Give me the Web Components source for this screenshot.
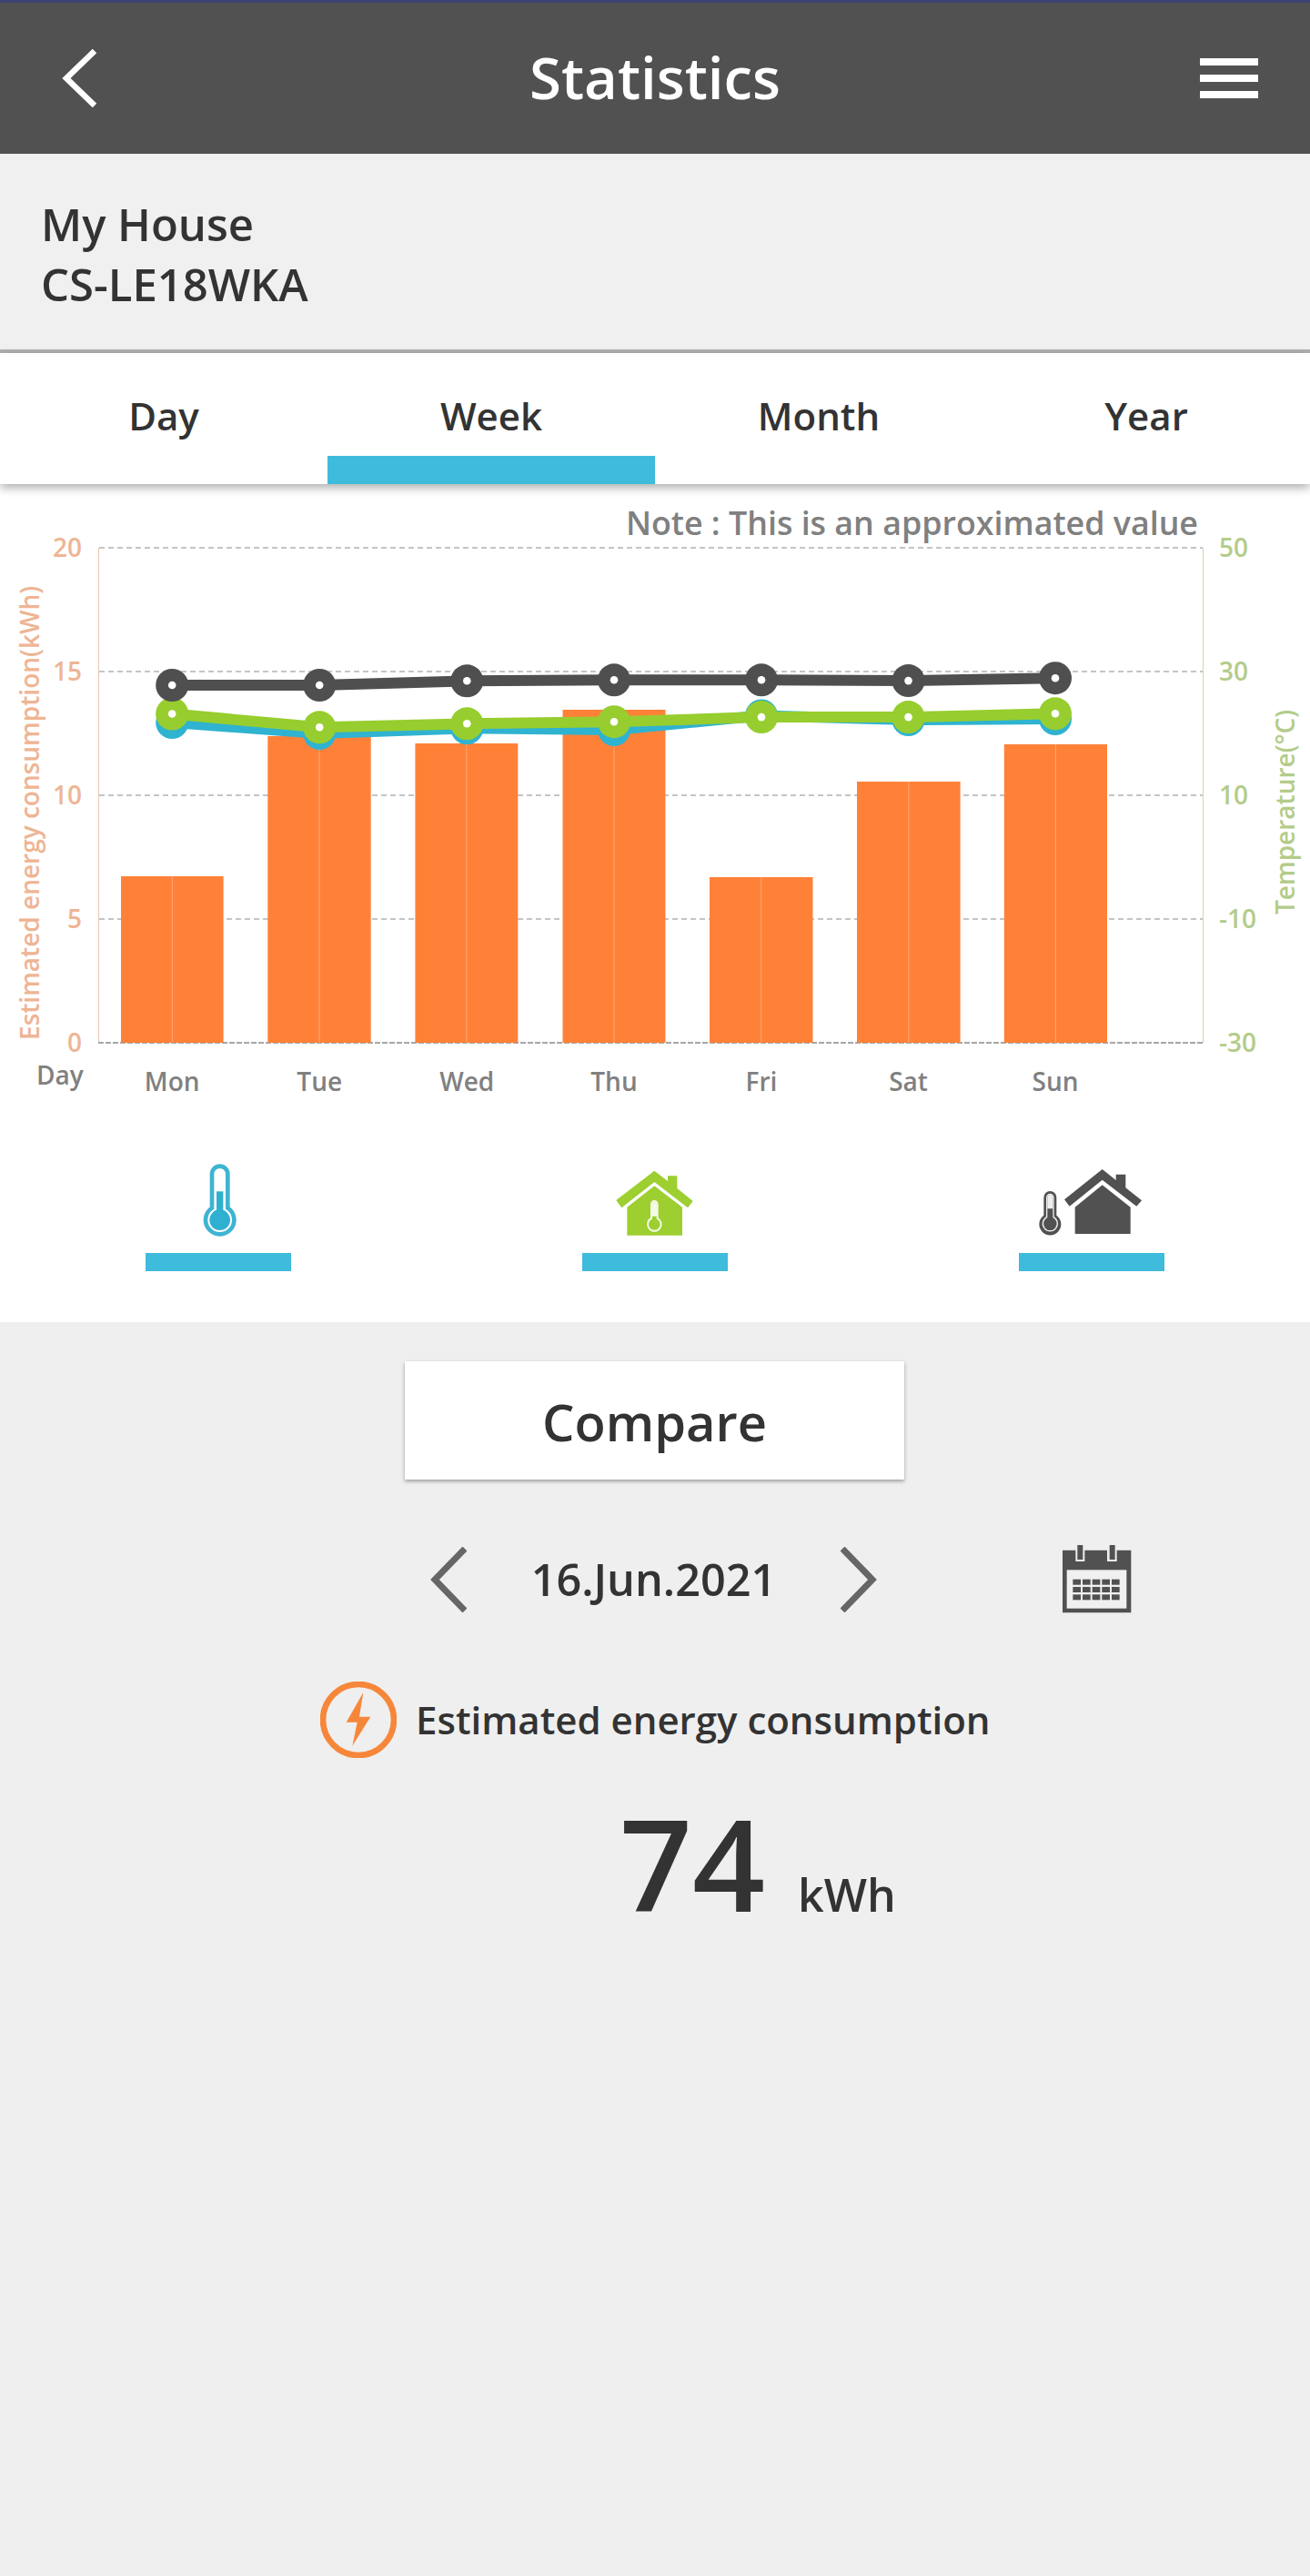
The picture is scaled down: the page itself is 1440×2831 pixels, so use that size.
<!DOCTYPE html>
<html lang="en">
<head>
<meta charset="utf-8">
<title>Statistics</title>
<style>
html,body{margin:0;padding:0;background:#efefef}
body{font-family:"Open Sans","Noto Sans",sans-serif;color:#333;width:1440px;min-height:2831px}
</style>
</head>
<body>
<app-header title-text="Statistics"></app-header>
<device-info><span>My House</span><span>CS-LE18WKA</span></device-info>
<period-tabs>
  <period-tab>Day</period-tab>
  <period-tab active>Week</period-tab>
  <period-tab>Month</period-tab>
  <period-tab>Year</period-tab>
</period-tabs>
<chart-panel>
  <stat-chart></stat-chart>
  <mode-icons></mode-icons>
</chart-panel>
<compare-button>Compare</compare-button>
<date-nav>16.Jun.2021</date-nav>
<energy-label>Estimated energy consumption</energy-label>
<energy-total value="74" unit="kWh"></energy-total>
<script>
const FONT='"Open Sans","Noto Sans",sans-serif';
function def(name,html){
  customElements.define(name,class extends HTMLElement{
    constructor(){super();const r=this.attachShadow({mode:'open'});r.innerHTML=html;}
  });
}
customElements.define('app-header',class extends HTMLElement{
  connectedCallback(){
    const r=this.attachShadow({mode:'open'});
    r.innerHTML=`<style>
    :host{display:grid;grid-template-columns:1fr auto 1fr;align-items:center;height:166px;background:#515151;border-top:3px solid #3d4170;color:#fff;font-family:${FONT}}
    h1{margin:0 0 3px;font-size:63.5px;font-weight:600;line-height:88px}
    .l{padding-left:68px;display:flex}.r{padding-right:57px;display:flex;justify-content:flex-end}
    svg{display:block}
    </style>
    <div class="l"><svg width="40" height="66" viewBox="0 0 40 66"><path d="M36 3 5 33 36 63" fill="none" stroke="#fff" stroke-width="6.5"/></svg></div>
    <h1>${this.getAttribute('title-text')}</h1>
    <div class="r"><svg width="64" height="44" viewBox="0 0 64 44" fill="#fff"><rect width="64" height="8"/><rect y="18" width="64" height="8"/><rect y="36" width="64" height="8"/></svg></div>`;
  }
});
def('device-info',`<style>
:host{display:block;box-sizing:border-box;height:219px;padding:44px 0 0 45px;background:#f0f0f0;border-bottom:4px solid #b1b1b1;font:600 49px/66px ${FONT};color:#333}
::slotted(span){display:block}
</style><slot></slot>`);
def('period-tabs',`<style>
:host{display:grid;grid-template-columns:repeat(4,360px);height:144px;background:#fff;box-shadow:0 4px 10px rgba(0,0,0,.32);position:relative;z-index:1}
</style><slot></slot>`);
customElements.define('period-tab',class extends HTMLElement{
  connectedCallback(){
    const r=this.attachShadow({mode:'open'});
    r.innerHTML=`<style>
    :host{display:flex;flex-direction:column;font:600 42px/85px ${FONT};color:#333;text-align:center}
    .t{box-sizing:border-box;height:113px;padding-top:26px}
    .b{height:31px;background:${this.hasAttribute('active')?'#3fbbdc':'transparent'}}
    </style><div class="t"><slot></slot></div><div class="b"></div>`;
  }
});
def('chart-panel',`<style>
:host{display:block;background:#fff;height:921px}
</style><slot></slot>`);
customElements.define('stat-chart',class extends HTMLElement{
  connectedCallback(){
    const xs=[189.2,351.2,513.3,675,837,998.5,1160];
    const days=['Mon','Tue','Wed','Thu','Fri','Sat','Sun'];
    const bars=[[133,245.6,963],[294.3,407.7,809],[456.4,569.3,817],[618.5,731.5,780],[780,893.5,964],[942,1055.6,859],[1103.8,1217,818]];
    const dark=[753,753,748.3,747.3,747.3,748.1,745.2];
    const green=[784.5,799.3,795.3,793.2,788.1,788.1,784.3];
    const blue=[794,806,800.3,802,786.4,791,790];
    const line=(ys,c,dots)=>`<polyline points="${xs.map((x,i)=>x+','+ys[i]).join(' ')}" fill="none" stroke="${c}" stroke-width="12" stroke-linejoin="round"/>`+
      xs.map((x,i)=>`<circle cx="${x}" cy="${ys[i]}" r="18" fill="${c}"/>`+(dots?`<circle cx="${x}" cy="${ys[i]}" r="4.3" fill="#fff"/>`:'')).join('');
    const grid=[602,738,874,1010].map(y=>`<line x1="109" x2="1322" y1="${y}" y2="${y}" stroke="#8a8a8a" stroke-dasharray="6 4"/>`).join('');
    const ly=[[602,'20','50'],[738,'15','30'],[874,'10','10'],[1010,'5','-10'],[1146,'0','-30']];
    const r=this.attachShadow({mode:'open'});
    r.innerHTML=`<style>
    :host{display:block;font-family:${FONT}}
    .note{padding:34px 123px 0 0;height:16px;line-height:16px;text-align:right;font-size:35.8px;font-weight:600;color:#808080}
    svg{display:block}
    text{font-family:${FONT};font-weight:600}
    .a{font-size:28px}
    .d{font-size:28px;fill:#808080;text-anchor:middle}
    </style>
    <div class="note">Note : This is an approximated value</div>
    <svg width="1440" height="638" viewBox="0 582 1440 638">
      ${grid}
      <line x1="108.5" x2="108.5" y1="602" y2="1146" stroke="#e9c9b2"/>
      <line x1="1322.5" x2="1322.5" y1="602" y2="1146" stroke="#cbdab0"/>
      <line x1="108" x2="1323" y1="1146" y2="1146" stroke="#8a8a8a" stroke-width="1.5" stroke-dasharray="6 2"/>
      ${bars.map(b=>`<rect x="${b[0]}" y="${b[2]}" width="${b[1]-b[0]}" height="${1146-b[2]}" fill="#ff8138"/><line x1="${(b[0]+b[1])/2}" x2="${(b[0]+b[1])/2}" y1="${b[2]}" y2="1146" stroke="#ffa877"/>`).join('')}
      ${line(blue,'#2fb3d0',false)}
      ${line(green,'#97cd2e',true)}
      ${line(dark,'#4f4f4f',true)}
      ${ly.map(l=>`<text class="a" x="90" y="${l[0]+10}" text-anchor="end" fill="#eeb594">${l[1]}</text><text class="a" x="1340" y="${l[0]+10}" fill="#b3cc8a">${l[2]}</text>`).join('')}
      <text transform="translate(43 1143) rotate(-90)" font-size="28" fill="#eeb594">Estimated energy consumption(kWh)</text>
      <text transform="translate(1423 1005) rotate(-90)" font-size="28" fill="#b3cc8a">Temperature(°C)</text>
      <text x="40" y="1192" font-size="28" fill="#808080">Day</text>
      ${days.map((d,i)=>`<text class="d" x="${xs[i]}" y="1198.5">${d}</text>`).join('')}
    </svg>`;
  }
});
customElements.define('mode-icons',class extends HTMLElement{
  connectedCallback(){
    const r=this.attachShadow({mode:'open'});
    const house=(c,inner)=>`
      <path d="M52 132 178 35 222 69V52H253V93L305 135 288 157 178 72 70 157Z" fill="${c}"/>
      <path d="M88 155 178 85 270 155V248H88Z" fill="${c}"/>${inner}`;
    const icons=[
      `<g transform="translate(120 0)">
        <path d="M125 35a26 26 0 0 1 26 26V173a47 47 0 1 1-52 0V61a26 26 0 0 1 26-26Z" fill="#fff" stroke="#3fb4d2" stroke-width="14"/>
        <rect x="114" y="118" width="22" height="70" fill="#2fb0d0"/><circle cx="125" cy="212" r="34" fill="#2fb0d0"/>
      </g>`,
      `<g transform="translate(60 15)">${house('#9ccf2f',`
        <path d="M178 135a10 10 0 0 1 10 10V192a22 22 0 1 1-20 0V145a10 10 0 0 1 10-10Z" fill="#9ccf2f" stroke="#f4fae6" stroke-width="6"/>
        <path d="M178 138a8 8 0 0 1 8 8V185H170V146a8 8 0 0 1 8-8Z" fill="#f4fae6"/>`)}</g>`,
      `<g transform="translate(30 15)">
        <path d="M120 130 245 30 290 66V47H322V91L375 133 358 152 245 65 137 152Z" fill="#515151"/>
        <path d="M155 155 245 82 338 155V243H155Z" fill="#515151"/>
        <path d="M73 102a21 21 0 0 1 21 21V182a36 36 0 1 1-42 0V123a21 21 0 0 1 21-21Z" fill="#515151"/>
        <path d="M73 112a11 11 0 0 1 11 11V188a24 24 0 1 1-22 0V123a11 11 0 0 1 11-11Z" fill="#515151" stroke="#eee" stroke-width="4"/>
        <path d="M73 114a9 9 0 0 1 9 9V160H64V123a9 9 0 0 1 9-9Z" fill="#eee"/>
      </g>`];
    r.innerHTML=`<style>
    :host{display:grid;grid-template-columns:repeat(3,480px);padding-top:50px}
    .c{display:flex;flex-direction:column;align-items:center;gap:7px}
    svg{display:block}
    .b{width:160px;height:20px;background:#3fbbdc}
    </style>`+icons.map(i=>`<div class="c"><svg width="160" height="100" viewBox="0 0 480 300">${i}</svg><div class="b"></div></div>`).join('');
  }
});
def('compare-button',`<style>
:host{display:block;box-sizing:border-box;width:549px;height:130px;margin:43px 0 0 445px;background:#fff;box-shadow:0 2px 4px rgba(0,0,0,.35);text-align:center;font:600 56px/132px ${FONT};color:#333}
</style><slot></slot>`);
def('date-nav',`<style>
:host{display:flex;align-items:center;height:75px;margin-top:72px;padding-left:473px;color:#333;font:600 48.6px/75px ${FONT}}
.t{width:411px;text-align:center}
svg{display:block;flex:none}
.cal{margin-left:204px}
</style>
<svg width="40" height="72" viewBox="0 0 40 72"><path d="M38 2 5 36 38 70" fill="none" stroke="#666" stroke-width="7"/></svg>
<div class="t"><slot></slot></div>
<svg width="40" height="72" viewBox="0 0 40 72"><path d="M2 2 35 36 2 70" fill="none" stroke="#666" stroke-width="7"/></svg>
<svg class="cal" width="76" height="75" viewBox="54 55 228 225">
  <path d="M54 72H97V109H127V72H201V109H233V72H280V278H54Z" fill="#515151"/>
  <rect x="103" y="55" width="18" height="48" fill="#515151"/><rect x="209" y="55" width="18" height="48" fill="#515151"/>
  <rect x="68" y="137" width="197" height="127" fill="#f0f0f0"/>
  <g fill="#515151">
  ${[168,193,218].map(y=>[88,120,152,184,216].map(x=>`<rect x="${x}" y="${y}" width="26" height="18"/>`).join('')).join('')}
  </g>
</svg>`);
def('energy-label',`<style>
:host{display:flex;align-items:center;gap:21px;height:84px;margin-top:75px;padding-left:352px;font:600 42px/60px ${FONT};color:#333}
svg{display:block;flex:none}
</style>
<svg width="84" height="84" viewBox="36 36 252 252">
  <circle cx="162" cy="162" r="117" fill="none" stroke="#f6873a" stroke-width="20"/>
  <path d="M178 72 122 170H158L142 248 202 152H165Z" fill="#f6873a"/>
</svg><span><slot></slot></span>`);
customElements.define('energy-total',class extends HTMLElement{
  connectedCallback(){
    const r=this.attachShadow({mode:'open'});
    r.innerHTML=`<style>
    :host{display:flex;align-items:baseline;margin-top:45px;padding-left:681px;color:#333;font-family:${FONT}}
    .v{font-size:140px;line-height:140px;font-weight:600}
    .u{font-size:50px;font-weight:600;margin-left:36px}
    </style><span class="v">${this.getAttribute('value')}</span><span class="u">${this.getAttribute('unit')}</span>`;
  }
});
</script>
</body>
</html>
